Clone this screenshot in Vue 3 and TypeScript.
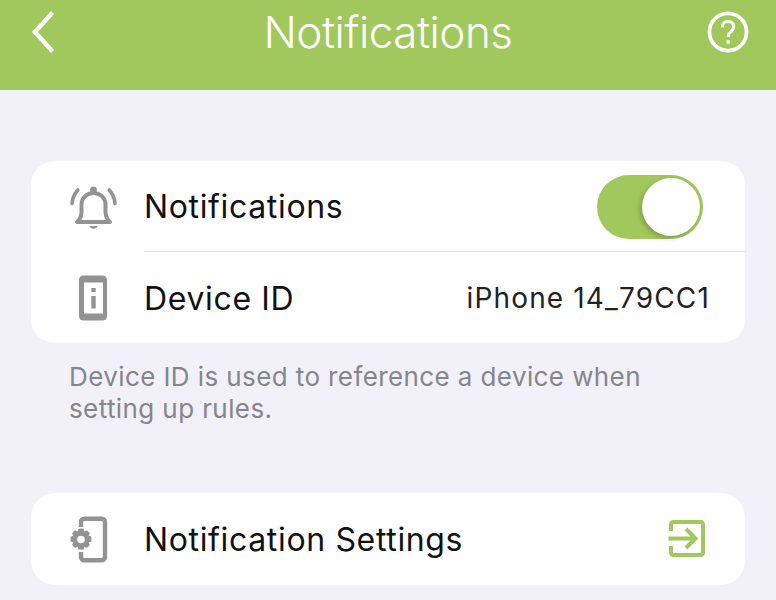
<script setup lang="ts">
// Notifications settings screen
const deviceId = 'iPhone 14_79CC1'
</script>

<template>
  <div class="screen">
    <header class="topbar">
      <button class="topbar__btn topbar__btn--back" type="button" aria-label="Back">
        <svg width="26" height="42" viewBox="0 0 26 42" fill="none" stroke="#fff" stroke-width="4.4">
          <path d="M23.500 1.500 L6 21 L23.500 40.500" />
        </svg>
      </button>
      <h1 class="topbar__title">Notifications</h1>
      <button class="topbar__btn topbar__btn--help" type="button" aria-label="Help">
        <svg width="42" height="42" viewBox="0 0 42 42" fill="none" stroke="#fff">
          <circle cx="21" cy="21" r="18.6" stroke-width="3.8" />
          <path d="M15.200 16.400c0-3.600 2.500-5.900 5.900-5.900 3.400 0 5.700 2.200 5.700 5.200 0 2.500-1.300 3.700-3 5-1.700 1.200-2.500 2.200-2.500 4.300v1" stroke-width="3" />
          <circle cx="21.200" cy="31" r="1.900" fill="#fff" stroke="none" />
        </svg>
      </button>
    </header>

    <main class="content">
      <section class="card">
        <div class="row">
          <span class="row__icon">
            <svg width="48" height="48" viewBox="0 0 48 48" fill="none" stroke="#939393">
              <path d="M8 39h33c-3-2.700-4.500-5.500-4.500-10v-7.500c0-6.500-5-11.500-12-11.500s-12 5-12 11.500V29c0 4.500-1.500 7.300-4.500 10z" stroke-width="4" stroke-linejoin="round" />
              <circle cx="24.500" cy="7" r="3.400" fill="#939393" stroke="none" />
              <path d="M20.500 43h8c-.7 1.800-2.200 2.800-4 2.800s-3.300-1-4-2.800z" fill="#939393" stroke="none" />
              <path d="M3 20.500c.4-5 2.200-9.500 5.800-13.500M46 20.500c-.4-5-2.200-9.500-5.800-13.500" stroke-width="3.600" stroke-linecap="round" />
            </svg>
          </span>
          <span class="row__label">Notifications</span>
          <span class="toggle" role="switch" aria-checked="true">
            <span class="toggle__knob"></span>
          </span>
        </div>
        <div class="row row--divided">
          <span class="row__icon">
            <svg width="48" height="48" viewBox="0 0 48 48">
              <rect x="10" y="1.500" width="28" height="45" rx="4.500" fill="#939393" />
              <rect x="15" y="8.500" width="19" height="31" fill="#fff" />
              <rect x="22.300" y="14" width="4.400" height="4" fill="#939393" />
              <rect x="22.300" y="22" width="4.400" height="12.500" fill="#939393" />
            </svg>
          </span>
          <span class="row__label">Device ID</span>
          <span class="row__value">{{ deviceId }}</span>
        </div>
      </section>
      <p class="note">Device ID is used to reference a device when setting up rules.</p>

      <section class="card card--second">
        <div class="row">
          <span class="row__icon">
            <svg width="48" height="48" viewBox="0 0 48 48" fill="none">
              <path d="M12 12V7c0-1.900 1.500-3.300 3.300-3.300h17.400c1.800 0 3.300 1.400 3.300 3.300v35c0 1.900-1.500 3.300-3.300 3.300H15.300c-1.800 0-3.300-1.400-3.300-3.300v-5" stroke="#939393" stroke-width="4.4" />
              <g transform="translate(-3 -1.500)">
                <path d="M15 15l2.500.3.9 2.700 2.500-1.200 3 3-1.200 2.500 2.700.9v4.800l-2.700.9 1.200 2.500-3 3-2.500-1.200-.9 2.700h-5l-.9-2.700-2.500 1.200-3-3 1.200-2.500-2.700-.9v-4.800l2.700-.9-1.200-2.500 3-3 2.500 1.200.9-2.700z" fill="#939393" />
                <circle cx="15" cy="26" r="3.800" fill="#fff" />
              </g>
            </svg>
          </span>
          <span class="row__label">Notification Settings</span>
          <svg class="row__action" width="40" height="40" viewBox="0 0 40 40" fill="none" stroke="#a1c85c" stroke-width="4">
            <path d="M4 12V5.500C4 4.100 5.100 3 6.500 3h27C34.900 3 36 4.100 36 5.500v28c0 1.400-1.100 2.500-2.500 2.500h-27C5.100 36 4 34.900 4 33.500V27" />
            <path d="M1.500 19.500H28M19 10l9.500 9.500L19 29" />
          </svg>
        </div>
      </section>
    </main>
  </div>
</template>

<style scoped>
.screen {
  width: 776px;
  height: 600px;
  overflow: hidden;
  background: #f2f1f9;
  font-family: Inter, "Liberation Sans", sans-serif;
  color: #111;
}

.topbar {
  height: 90px;
  background: #a1c85c;
  display: flex;
  justify-content: space-between;
  padding: 11px 27px 0;
  box-sizing: border-box;
}

.topbar__btn {
  width: 42px;
  height: 42px;
  padding: 0;
  border: 0;
  background: none;
  display: flex;
}

.topbar__btn--back svg {
  margin-left: 2px;
}

.topbar__title {
  margin: 0;
  font-size: 44px;
  line-height: 42px;
  font-weight: 300;
  color: #fff;
  letter-spacing: -0.5px;
}

.content {
  padding: 71px 31px 0;
}

.card {
  background: #fff;
  border-radius: 24px;
}

.card--second {
  margin-top: 68px;
}

.card--second .row {
  height: 92px;
}

.row {
  height: 91px;
  display: flex;
  align-items: center;
  padding-right: 42px;
  position: relative;
}

.row--divided::before {
  content: "";
  position: absolute;
  left: 113px;
  right: 0;
  top: -1px;
  height: 1px;
  background: #e6e6e9;
}

.row--divided .row__label {
  margin-top: 2px;
}

.row__icon {
  width: 48px;
  height: 48px;
  margin: 0 27px 0 38px;
  display: flex;
}

.row__label {
  flex: 1;
  font-size: 32px;
  letter-spacing: 0.65px;
}

.row__value {
  font-size: 28px;
  letter-spacing: 1.15px;
  margin-right: -7px;
  color: #222;
}

.row__action {
  margin-right: -4px;
}

.toggle {
  width: 106px;
  height: 64px;
  border-radius: 32px;
  background: #a1c85c;
  position: relative;
}

.toggle__knob {
  position: absolute;
  top: 3px;
  right: 3px;
  width: 58px;
  height: 58px;
  border-radius: 50%;
  background: #fff;
  box-shadow: -2px 2px 5px rgba(0, 0, 0, 0.22);
}

.note {
  margin: 18px 0 0;
  padding: 0 60px 0 38px;
  font-size: 26px;
  line-height: 32px;
  letter-spacing: 0.4px;
  color: #85858c;
}
</style>
